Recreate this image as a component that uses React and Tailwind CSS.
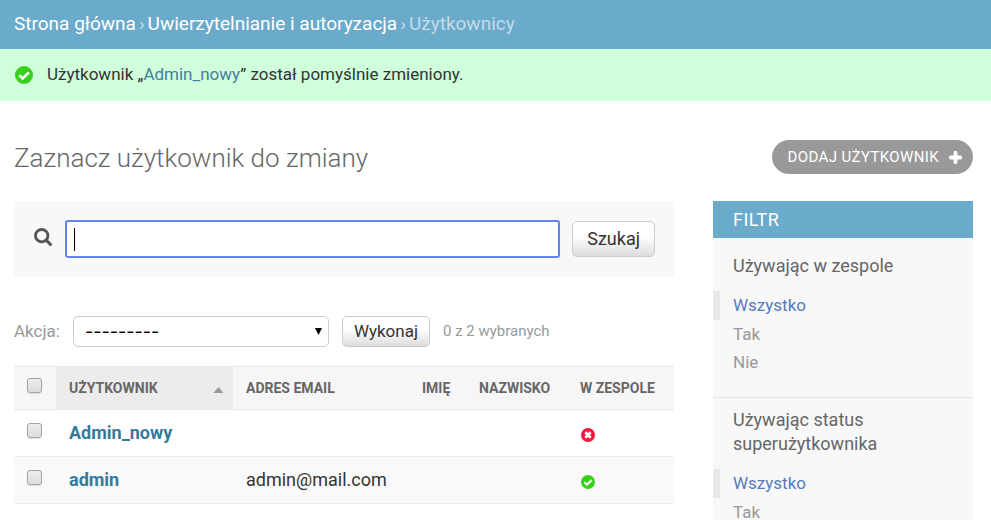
import React from "react";

const users = [
  { name: "Admin_nowy", email: "", staff: false },
  { name: "admin", email: "admin@mail.com", staff: true },
];

const filters = [
  { title: "Używając w zespole", options: ["Wszystko", "Tak", "Nie"] },
  { title: "Używając status superużytkownika", options: ["Wszystko", "Tak"] },
];

function YesIcon({ className }) {
  return (
    <svg viewBox="0 0 26 26" className={className} role="img" aria-label="Tak">
      <circle cx="13" cy="13" r="13" fill="#38d01a" />
      <path d="M6.2 13.4 11.2 18 20 9.3" fill="none" stroke="#fff" strokeWidth="3.8" />
    </svg>
  );
}

function NoIcon({ className }) {
  return (
    <svg viewBox="0 0 26 26" className={className} role="img" aria-label="Nie">
      <circle cx="13" cy="13" r="13" fill="#f1183c" />
      <path d="M8 8 18 18 M18 8 8 18" fill="none" stroke="#fff" strokeWidth="5" />
    </svg>
  );
}

function SearchIcon() {
  return (
    <svg viewBox="0 0 18 18" className="size-[18px] shrink-0" aria-hidden="true">
      <circle cx="7.7" cy="7.7" r="6.2" fill="none" stroke="#555" strokeWidth="2.8" />
      <path d="M12 12 16.4 16.4" stroke="#555" strokeWidth="3" strokeLinecap="round" />
    </svg>
  );
}

function PlusIcon() {
  return (
    <svg viewBox="0 0 13 13" className="size-[13px]" aria-hidden="true">
      <path d="M6.5 1.7V11.3 M1.7 6.5H11.3" stroke="#fff" strokeWidth="3.8" strokeLinecap="round" />
    </svg>
  );
}

function Check({ label }) {
  return (
    <input
      type="checkbox"
      aria-label={label}
      className="block size-[15px] appearance-none rounded-[3px] border border-[#a3a3a3] bg-linear-to-b from-[#ededed] to-[#dcdcdc] shadow-[0_1px_1px_rgba(0,0,0,0.12)]"
    />
  );
}

function Th({ children, className = "" }) {
  return (
    <th scope="col" className={`h-[43px] px-[13px] text-left text-sm font-bold whitespace-nowrap text-[#666] uppercase ${className}`}>
      {children}
    </th>
  );
}

function FilterGroup({ title, options, first }) {
  return (
    <section className={first ? "pt-4" : "mt-[21px] border-t border-[#e6e6e6] pt-[10px]"}>
      <h3 className="px-5 text-lg leading-6 text-[#666]">{title}</h3>
      <ul className="mt-[13px]">
        {options.map((option, i) => (
          <li key={option} className={i === 0 ? "border-l-[7px] border-[#e8e8e8] pl-[13px]" : "pl-5"}>
            <a href="#" className={i === 0 ? "block text-[17px] leading-[29px] text-[#557abf]" : "block text-[17px] leading-7 text-[#999]"}>
              {option}
            </a>
          </li>
        ))}
      </ul>
    </section>
  );
}

export default function App() {
  return (
    <div className="min-h-screen bg-white font-[Roboto,'Liberation_Sans',sans-serif] text-[#333]">
      <nav className="flex h-[49px] items-center gap-[3px] bg-[#6aaaca] px-[14px] pb-px text-[19px] text-[#c4dce8]">
        <a href="#" className="text-white">Strona główna</a>
        <span>›</span>
        <a href="#" className="text-white">Uwierzytelnianie i autoryzacja</a>
        <span>›</span>
        <span>Użytkownicy</span>
      </nav>

      <div className="flex h-[52px] items-center gap-[14px] bg-[#cfffdb] px-[15px] text-[17px]">
        <YesIcon className="size-[18px]" />
        <p>
          Użytkownik „<a href="#" className="text-[#447e9b]">Admin_nowy</a>” został pomyślnie zmieniony.
        </p>
      </div>

      <main className="pr-[18px] pl-[14px]">
        <div className="flex items-start justify-between pt-[39px]">
          <h1 className="text-[26px] leading-9 font-light text-[#666]">Zaznacz użytkownik do zmiany</h1>
          <a href="#" className="flex h-[34px] items-center gap-[10px] rounded-full bg-[#999] pr-[11px] pl-4 text-[15px] tracking-wide text-white uppercase">
            Dodaj użytkownik
            <PlusIcon />
          </a>
        </div>

        <div className="mt-[25px] flex items-start gap-[39px]">
          <div className="min-w-0 flex-1">
            <form className="flex h-[76px] items-center bg-[#f8f8f8] pr-[19px] pl-5">
              <label htmlFor="searchbar" className="mr-[13px] pb-1">
                <SearchIcon />
              </label>
              <div className="relative min-w-0 flex-1">
                <input
                  id="searchbar"
                  type="text"
                  aria-label="Szukaj"
                  className="block h-[38px] w-full rounded-[3px] border-2 border-[#6583ee] bg-white px-2 text-lg outline-none"
                />
                <span className="absolute top-2 left-[9px] h-[23px] w-px bg-black" />
              </div>
              <button type="button" className="ml-3 h-9 rounded-[5px] border border-[#ccc] bg-linear-to-b from-white from-40% to-[#ddd] px-[14px] text-lg">
                Szukaj
              </button>
            </form>

            <div className="mt-[39px] flex items-center text-[#999]">
              <label htmlFor="action" className="text-[17px]">Akcja:</label>
              <div className="relative ml-[13px]">
                <select id="action" className="block h-[31px] w-64 appearance-none rounded-[5px] border border-[#ccc] bg-white px-[11px] font-[Inter,sans-serif] text-lg leading-6 text-black">
                  <option>---------</option>
                </select>
                <svg viewBox="0 0 7 7" className="pointer-events-none absolute top-3 right-[7px] size-[7px]" aria-hidden="true">
                  <path d="M0 0H7L3.5 7Z" fill="#000" />
                </svg>
              </div>
              <button type="button" className="ml-[13px] h-[31px] rounded-[5px] border border-[#ccc] bg-linear-to-b from-white from-40% to-[#ddd] px-[11px] text-[17px] text-[#333]">
                Wykonaj
              </button>
              <span className="ml-[13px] text-[15px]">0 z 2 wybranych</span>
            </div>

            <table className="mt-[19px] w-full border-collapse">
              <thead>
                <tr className="border-y border-[#eaeaea] bg-[#f6f6f6]">
                  <th scope="col" className="w-[42px] pt-[11px] pl-[13px] align-top">
                    <Check label="Zaznacz wszystko" />
                  </th>
                  <Th className="w-[177px] bg-[#ececec]">
                    <span className="flex items-center justify-between">
                      Użytkownik
                      <svg viewBox="0 0 10 6" className="mt-1 -mr-1 h-[6px] w-[11px]" aria-hidden="true">
                        <path d="M5 0 10 6H0Z" fill="#999" />
                      </svg>
                    </span>
                  </Th>
                  <Th>Adres email</Th>
                  <Th className="w-[57px]">Imię</Th>
                  <Th className="w-[101px]">Nazwisko</Th>
                  <Th className="w-[107px]">W zespole</Th>
                </tr>
              </thead>
              <tbody>
                {users.map((user) => (
                  <tr key={user.name} className="h-[47px] border-b border-[#eaeaea] even:bg-[#f9f9f9]">
                    <td className="pt-[13px] pl-[13px] align-top">
                      <Check label={user.name} />
                    </td>
                    <th scope="row" className="px-[13px] text-left text-lg font-bold">
                      <a href="#" className="text-[#337b9c]">{user.name}</a>
                    </th>
                    <td className="px-[13px] text-lg">{user.email}</td>
                    <td></td>
                    <td></td>
                    <td className="px-[14px] pt-1">
                      {user.staff ? <YesIcon className="block size-[14px]" /> : <NoIcon className="block size-[14px]" />}
                    </td>
                  </tr>
                ))}
              </tbody>
            </table>
          </div>

          <aside className="w-[260px] shrink-0 bg-[#f8f8f8]">
            <h2 className="bg-[#6aaaca] px-5 text-lg leading-[37px] tracking-wide text-white uppercase">Filtr</h2>
            {filters.map((group, i) => (
              <FilterGroup key={group.title} {...group} first={i === 0} />
            ))}
          </aside>
        </div>
      </main>
    </div>
  );
}
